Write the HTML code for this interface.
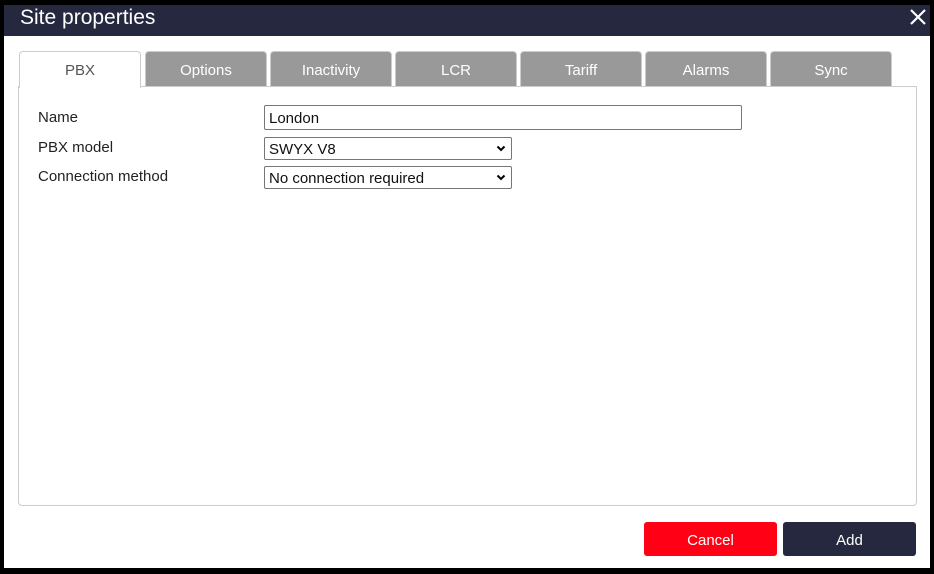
<!DOCTYPE html>
<html><head><style>
*{box-sizing:border-box;margin:0;padding:0}
body{width:934px;height:574px;background:#000;font-family:"Liberation Sans",sans-serif;position:relative;overflow:hidden}
.win{position:absolute;left:4px;top:5px;width:926px;height:563px;background:#fff}
.title{position:absolute;left:0;top:0;width:926px;height:31px;background:#262840;color:#fff;font-size:21px;padding:0 0 0 16px;line-height:26px}
.x{position:absolute;right:2px;top:2px;width:20px;height:20px}
.tab{position:absolute;top:46px;height:36px;width:122px;border:1px solid #ccc;border-bottom:none;border-radius:4px 4px 0 0;background:#999;color:#fff;font-size:15px;text-align:center;line-height:38px}
.tab.a{background:#fff;color:#555;height:37px;z-index:2}
.panel{position:absolute;left:14px;top:81px;width:899px;height:420px;border:1px solid #ccc;border-radius:0 0 4px 4px}
.lbl{position:absolute;left:34px;font-size:15px;color:#222}
.inp{position:absolute;left:260px;border:1px solid #767676;border-radius:2px;font-size:15px;color:#111;padding-left:4px;background:#fff}
.chev{position:absolute;right:5px;top:5px;width:10px;height:10px}
.btn{position:absolute;top:517px;height:34px;width:133px;border-radius:3px;color:#fff;font-size:15px;text-align:center;line-height:37px}
</style></head><body>
<div class="win">
<div class="title">Site properties<svg class="x" viewBox="0 0 20 20"><path d="M3 3L17 17M17 3L3 17" stroke="#fff" stroke-width="2.2"/></svg></div>
<div class="tab a" style="left:15px">PBX</div>
<div class="tab" style="left:141px">Options</div>
<div class="tab" style="left:266px">Inactivity</div>
<div class="tab" style="left:391px">LCR</div>
<div class="tab" style="left:516px">Tariff</div>
<div class="tab" style="left:641px">Alarms</div>
<div class="tab" style="left:766px">Sync</div>
<div class="panel"></div>
<div class="lbl" style="top:104px">Name</div>
<div class="lbl" style="top:134px">PBX model</div>
<div class="lbl" style="top:163px">Connection method</div>
<div class="inp" style="top:100px;width:478px;height:25px;line-height:25px">London</div>
<div class="inp" style="top:132px;width:248px;height:23px;line-height:23px">SWYX V8<svg class="chev" viewBox="0 0 10 10"><path d="M1.5 3.5L5 7L8.5 3.5" stroke="#000" stroke-width="2" fill="none"/></svg></div>
<div class="inp" style="top:161px;width:248px;height:23px;line-height:23px">No connection required<svg class="chev" viewBox="0 0 10 10"><path d="M1.5 3.5L5 7L8.5 3.5" stroke="#000" stroke-width="2" fill="none"/></svg></div>
<div class="btn" style="left:640px;background:#ff0015">Cancel</div>
<div class="btn" style="left:779px;background:#262840">Add</div>
</div>
</body></html>
